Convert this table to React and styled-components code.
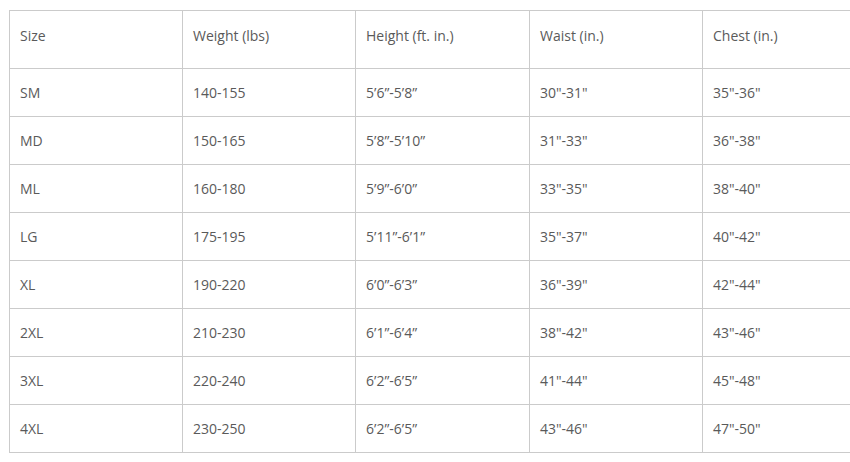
import React from "react";
import styled, { createGlobalStyle } from "styled-components";

const Global = createGlobalStyle`
  html, body { margin: 0; padding: 0; background: #fff; overflow: hidden; }
  body { font-family: "Open Sans", "Liberation Sans", sans-serif; }
`;

const Page = styled.div`
  padding: 10px 0 0 9px;
  height: 462px;
  box-sizing: border-box;
`;

const Table = styled.table`
  border-collapse: collapse;
  table-layout: fixed;
  width: 841px;
  font-size: 14px;
  color: #5a5a5a;
`;

const Cell = styled.td`
  border: 1px solid #cbcbcb;
  padding: ${(p) => (p.$head ? "15px 0 0 10px" : "0 0 0 10px")};
  height: ${(p) => (p.$head ? 42 : 47)}px;
  text-align: left;
  vertical-align: ${(p) => (p.$head ? "top" : "middle")};
  font-weight: 400;
  white-space: nowrap;
  line-height: 19px;
  &:last-child { border-right: none; }
`;

const headers = ["Size", "Weight (lbs)", "Height (ft. in.)", "Waist (in.)", "Chest (in.)"];
const rows = [
  ["SM", "140-155", "5\u20196\u201d-5\u20198\u201d", '30"-31"', '35"-36"'],
  ["MD", "150-165", "5\u20198\u201d-5\u201910\u201d", '31"-33"', '36"-38"'],
  ["ML", "160-180", "5\u20199\u201d-6\u20190\u201d", '33"-35"', '38"-40"'],
  ["LG", "175-195", "5\u201911\u201d-6\u20191\u201d", '35"-37"', '40"-42"'],
  ["XL", "190-220", "6\u20190\u201d-6\u20193\u201d", '36"-39"', '42"-44"'],
  ["2XL", "210-230", "6\u20191\u201d-6\u20194\u201d", '38"-42"', '43"-46"'],
  ["3XL", "220-240", "6\u20192\u201d-6\u20195\u201d", '41"-44"', '45"-48"'],
  ["4XL", "230-250", "6\u20192\u201d-6\u20195\u201d", '43"-46"', '47"-50"'],
];

const widths = [173, 173, 174, 173, 148];

export default function App() {
  return (
    <Page>
      <Global />
      <Table>
        <colgroup>
          {widths.map((w, i) => (
            <col key={i} style={{ width: w }} />
          ))}
        </colgroup>
        <tbody>
          <tr>
            {headers.map((h) => (
              <Cell key={h} $head>{h}</Cell>
            ))}
          </tr>
          {rows.map((r) => (
            <tr key={r[0]}>
              {r.map((c, i) => (
                <Cell key={i}>{c}</Cell>
              ))}
            </tr>
          ))}
        </tbody>
      </Table>
    </Page>
  );
}
